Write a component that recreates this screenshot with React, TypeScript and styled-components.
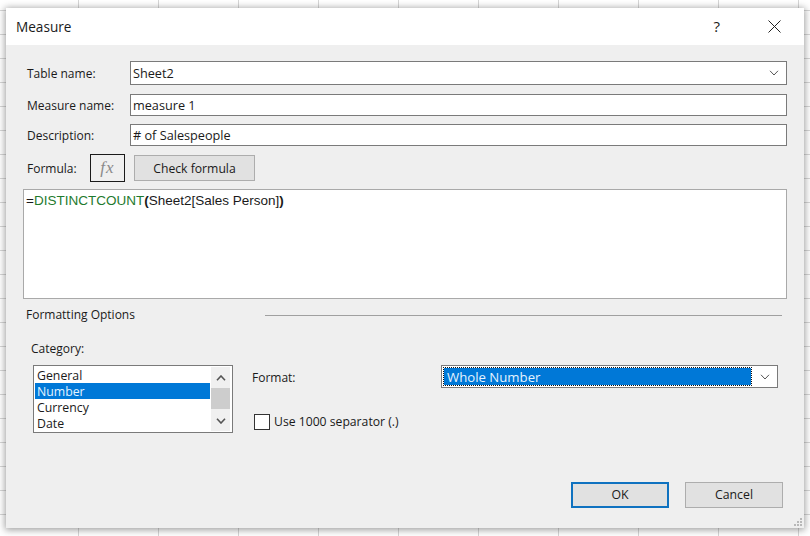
import React from "react";
import styled, { createGlobalStyle } from "styled-components";

const Global = createGlobalStyle`
  html, body { margin: 0; padding: 0; }
  body {
    width: 810px;
    height: 536px;
    overflow: hidden;
    background-color: #fff;
    background-image:
      linear-gradient(to right, #d6d6d6 1px, transparent 1px),
      linear-gradient(to bottom, #d6d6d6 1px, transparent 1px);
    background-size: 80px 24px;
    background-position: 78px 10px;
    font-family: "Open Sans", "Liberation Sans", sans-serif;
    font-size: 12px;
    color: #1a1a1a;
  }
`;

const Page = styled.div`
  box-sizing: border-box;
  height: 536px;
  padding: 8px 6px;
`;

const Dialog = styled.div`
  position: relative;
  height: 520px;
  display: flex;
  flex-direction: column;
  background: #efefef;
  box-shadow: 0 1px 7px 1px rgba(0, 0, 0, 0.38);
`;

const TitleBar = styled.div`
  height: 37px;
  flex: none;
  display: flex;
  align-items: center;
  background: #fff;
  padding: 0 23px 0 10px;
`;

const Title = styled.div`
  flex: 1;
  font-size: 13.6px;
`;

const Help = styled.span`
  font-size: 15px;
  margin-right: 48px;
  position: relative;
  top: -1px;
`;

const CloseIcon = styled.svg`
  margin-top: -1px;
`;

const Body = styled.div`
  flex: 1;
  display: flex;
  flex-direction: column;
  padding: 16px 17px 20px;
`;

const FieldRow = styled.div<{ $h: number; $mt?: number }>`
  display: grid;
  grid-template-columns: 103px 1fr;
  align-items: center;
  height: ${(p) => p.$h}px;
  margin-top: ${(p) => p.$mt ?? 0}px;
  padding-left: 4px;
`;

const Label = styled.label`
  white-space: nowrap;
`;

const InputBox = styled.div`
  box-sizing: border-box;
  height: 100%;
  display: flex;
  align-items: center;
  justify-content: space-between;
  background: #fff;
  border: 1px solid #7a7a7a;
  padding: 0 7px 0 2px;
  font-size: 12.7px;
`;

const FormulaRow = styled.div`
  display: flex;
  align-items: center;
  height: 28px;
  margin-top: 8px;
  padding-left: 4px;
`;

const FormulaLabel = styled(Label)`
  width: 63px;
`;

const FxButton = styled.div`
  box-sizing: border-box;
  width: 35px;
  height: 28px;
  display: flex;
  align-items: center;
  justify-content: center;
  border: 1px solid #1a1a1a;
  font-family: "Liberation Serif", serif;
  font-style: italic;
  font-size: 17px;
  color: #8a8a8a;
  letter-spacing: 1px;
`;

const Button = styled.div<{ $primary?: boolean }>`
  box-sizing: border-box;
  display: flex;
  align-items: center;
  justify-content: center;
  background: #e1e1e1;
  border: ${(p) => (p.$primary ? "2px solid #0f72c0" : "1px solid #adadad")};
`;

const CheckButton = styled(Button)`
  width: 121px;
  height: 26px;
  margin-left: 9px;
  font-size: 12.2px;
`;

const Editor = styled.div`
  box-sizing: border-box;
  height: 110px;
  margin-top: 7px;
  background: #fff;
  border: 1px solid #a9a9a9;
  padding: 3px 2px;
  font-family: "Liberation Sans", Arial, sans-serif;
  font-size: 13.5px;
  line-height: 15px;
`;

const Fn = styled.span`
  color: #1f7a2e;
`;

const Paren = styled.b`
  font-weight: 700;
`;

const SectionRow = styled.div`
  display: flex;
  align-items: center;
  height: 16px;
  margin-top: 7px;
  padding-left: 3px;
  padding-right: 5px;
`;

const SectionTitle = styled.div`
  width: 239px;
  flex: none;
`;

const Rule = styled.div`
  flex: 1;
  height: 1px;
  margin-top: 2px;
  background: #a0a0a0;
`;

const CategoryLabel = styled.div`
  height: 16px;
  margin-top: 19px;
  padding-left: 8px;
  line-height: 16px;
`;

const FormatArea = styled.div`
  display: flex;
  margin-top: 8px;
  padding-left: 10px;
`;

const ListBox = styled.div`
  box-sizing: border-box;
  width: 200px;
  height: 68px;
  flex: none;
  display: flex;
  background: #fff;
  border: 1px solid #7a7a7a;
  padding: 1px 2px 1px 1px;
`;

const Items = styled.div`
  flex: 1;
`;

const Item = styled.div<{ $selected?: boolean }>`
  height: 16px;
  line-height: 18px;
  padding-left: 2px;
  font-size: 12.3px;
  background: ${(p) => (p.$selected ? "#0078d7" : "transparent")};
  color: ${(p) => (p.$selected ? "#e4f3ff" : "#1a1a1a")};
`;

const ScrollBar = styled.div`
  width: 19px;
  margin-left: 1px;
  display: flex;
  flex-direction: column;
  align-items: center;
  background: #f0f0f0;
`;

const ScrollButton = styled.div`
  height: 21px;
  flex: none;
  display: flex;
  align-items: center;
  justify-content: center;
`;

const Thumb = styled.div`
  width: 100%;
  height: 21px;
  flex: none;
  background: #cdcdcd;
`;

const ScrollGap = styled.div`
  flex: 1;
`;

const FormatColumn = styled.div`
  flex: 1;
  margin-left: 19px;
  padding-right: 9px;
`;

const FormatRow = styled.div`
  display: grid;
  grid-template-columns: 189px 1fr;
  align-items: center;
  height: 23px;
`;

const FormatLabel = styled(Label)`
  position: relative;
  top: 1px;
`;

const Select = styled.div`
  box-sizing: border-box;
  height: 23px;
  display: flex;
  align-items: center;
  background: #fff;
  border: 1px solid #7a7a7a;
  padding: 2px 7px 2px 2px;
`;

const SelectValue = styled.div`
  box-sizing: border-box;
  flex: 1;
  height: 17px;
  line-height: 18px;
  font-size: 13.2px;
  background: #0078d7;
  color: #e4f3ff;
  outline: 1px dotted #111;
  padding-left: 3px;
  margin-right: 9px;
`;

const CheckRow = styled.div`
  display: flex;
  align-items: center;
  margin-top: 26px;
  padding-left: 2px;
  height: 16px;
`;

const CheckBox = styled.div`
  box-sizing: border-box;
  width: 16px;
  height: 16px;
  background: #fff;
  border: 1px solid #333;
  margin-right: 4px;
`;

const CheckLabel = styled(Label)`
  font-size: 12.2px;
  position: relative;
  top: -1px;
`;

const Footer = styled.div`
  margin-top: auto;
  display: flex;
  justify-content: flex-end;
  gap: 16px;
  padding-right: 4px;
`;

const DialogButton = styled(Button)`
  width: 98px;
  height: 26px;
  font-size: 12.3px;
  padding-bottom: 2px;
`;

const Grip = styled.svg`
  position: absolute;
  right: 1px;
  bottom: 1px;
`;

const Chevron = ({ up, color = "#555", w = 1 }: { up?: boolean; color?: string; w?: number }) => (
  <svg width="10" height="6" viewBox="0 0 10 6" fill="none">
    <path d={up ? "M1 5.2 L5 1 L9 5.2" : "M1 .8 L5 5 L9 .8"} stroke={color} strokeWidth={w} />
  </svg>
);

export default function App() {
  return (
    <Page>
      <Global />
      <Dialog>
        <TitleBar>
          <Title>Measure</Title>
          <Help>?</Help>
          <CloseIcon width="13" height="13" viewBox="0 0 13 13" fill="none">
            <path d="M.5 .5 L12.5 12.5 M12.5 .5 L.5 12.5" stroke="#222" strokeWidth="1" />
          </CloseIcon>
        </TitleBar>
        <Body>
          <FieldRow $h={24}>
            <Label>Table name:</Label>
            <InputBox>
              Sheet2
              <Chevron />
            </InputBox>
          </FieldRow>
          <FieldRow $h={22} $mt={9}>
            <Label>Measure name:</Label>
            <InputBox>measure 1</InputBox>
          </FieldRow>
          <FieldRow $h={22} $mt={8}>
            <Label>Description:</Label>
            <InputBox># of Salespeople</InputBox>
          </FieldRow>
          <FormulaRow>
            <FormulaLabel>Formula:</FormulaLabel>
            <FxButton>fx</FxButton>
            <CheckButton>Check formula</CheckButton>
          </FormulaRow>
          <Editor>
            =<Fn>DISTINCTCOUNT</Fn>
            <Paren>(</Paren>Sheet2[Sales Person]<Paren>)</Paren>
          </Editor>
          <SectionRow>
            <SectionTitle>Formatting Options</SectionTitle>
            <Rule />
          </SectionRow>
          <CategoryLabel>Category:</CategoryLabel>
          <FormatArea>
            <ListBox>
              <Items>
                <Item>General</Item>
                <Item $selected>Number</Item>
                <Item>Currency</Item>
                <Item>Date</Item>
              </Items>
              <ScrollBar>
                <ScrollButton>
                  <Chevron up w={1.6} />
                </ScrollButton>
                <Thumb />
                <ScrollGap />
                <ScrollButton>
                  <Chevron w={1.6} />
                </ScrollButton>
              </ScrollBar>
            </ListBox>
            <FormatColumn>
              <FormatRow>
                <FormatLabel>Format:</FormatLabel>
                <Select>
                  <SelectValue>Whole Number</SelectValue>
                  <Chevron />
                </Select>
              </FormatRow>
              <CheckRow>
                <CheckBox />
                <CheckLabel>Use 1000 separator (.)</CheckLabel>
              </CheckRow>
            </FormatColumn>
          </FormatArea>
          <Footer>
            <DialogButton $primary>OK</DialogButton>
            <DialogButton>Cancel</DialogButton>
          </Footer>
        </Body>
        <Grip width="10" height="10" viewBox="0 0 10 10" fill="#b8b8b8">
          <rect x="7" y="1" width="2" height="2" />
          <rect x="4" y="4" width="2" height="2" />
          <rect x="7" y="4" width="2" height="2" />
          <rect x="1" y="7" width="2" height="2" />
          <rect x="4" y="7" width="2" height="2" />
          <rect x="7" y="7" width="2" height="2" />
        </Grip>
      </Dialog>
    </Page>
  );
}
